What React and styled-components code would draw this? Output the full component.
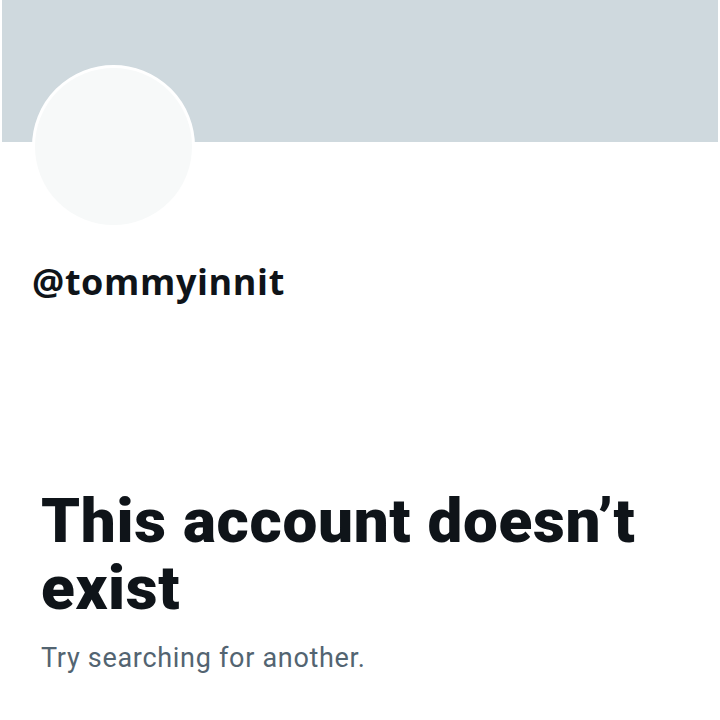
import React from "react";
import styled, { createGlobalStyle } from "styled-components";

const Global = createGlobalStyle`
  html, body {
    margin: 0;
    padding: 0;
    background: #ffffff;
  }
  body {
    font-family: Roboto, "Liberation Sans", sans-serif;
    color: #0f1419;
  }
`;

const Page = styled.div`
  width: 720px;
  height: 720px;
  overflow: hidden;
  display: flex;
  flex-direction: column;
`;

const Banner = styled.div`
  height: 142px;
  margin: 0 2px;
  background: #cfd9de;
`;

const ProfileTop = styled.div`
  padding: 0 32px;
`;

const Avatar = styled.div`
  width: 157px;
  height: 157px;
  margin-top: -77px;
  border-radius: 50%;
  background: #f7f9f9;
  border: 3px solid #ffffff;
`;

const Handle = styled.div`
  margin-top: 32px;
  font-family: "Open Sans", sans-serif;
  font-weight: 700;
  font-size: 36px;
  line-height: 44px;
  letter-spacing: 0.6px;
`;

const Empty = styled.div`
  padding: 0 41px;
  margin-top: 183px;
`;

const Title = styled.h1`
  margin: 0;
  font-family: Roboto, sans-serif;
  font-weight: 900;
  font-size: 62px;
  line-height: 67px;
  letter-spacing: 0.7px;
`;

const Sub = styled.p`
  margin: 20px 0 0;
  font-family: Roboto, sans-serif;
  font-size: 27px;
  line-height: 34px;
  letter-spacing: 0.7px;
  color: #536471;
`;

export default function App() {
  return (
    <Page>
      <Global />
      <Banner />
      <ProfileTop>
        <Avatar />
        <Handle>@tommyinnit</Handle>
      </ProfileTop>
      <Empty>
        <Title>This account doesn’t exist</Title>
        <Sub>Try searching for another.</Sub>
      </Empty>
    </Page>
  );
}
